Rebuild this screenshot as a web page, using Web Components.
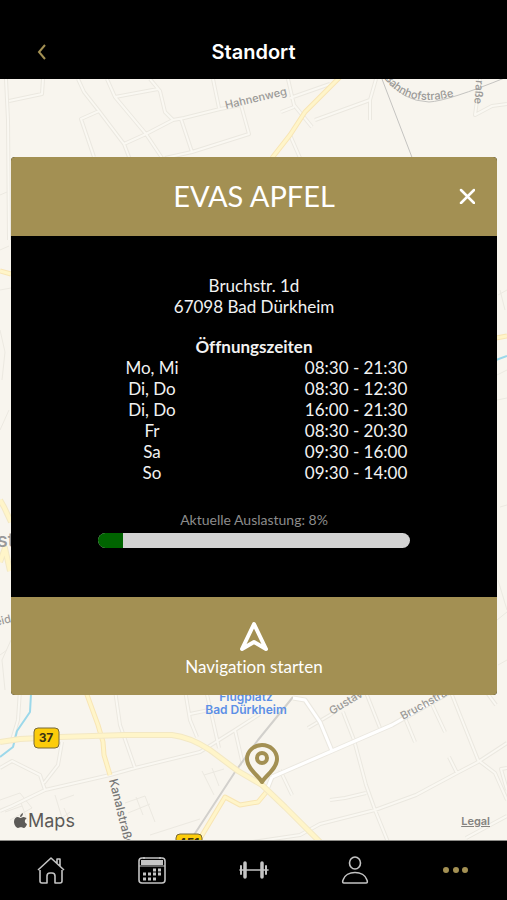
<!DOCTYPE html>
<html lang="de">
<head>
<meta charset="utf-8">
<meta name="viewport" content="width=device-width, initial-scale=1">
<title>Standort</title>
<style>
    body {
        margin: 0;
        background: #000;
        font-family: Lato, "Open Sans", sans-serif;
        font-variant-ligatures: none;
        --gold: #a39053;
    }
</style>
</head>
<body>
<app-shell>
    <app-header slot="header">Standort</app-header>
    <map-view>
        <location-card load="8">
            <span slot="name">EVAS APFEL</span>
            <span slot="street">Bruchstr. 1d</span>
            <span slot="city">67098 Bad Dürkheim</span>
            <opening-hours slot="hours">Öffnungszeiten</opening-hours>
            <span slot="action">Navigation starten</span>
        </location-card>
    </map-view>
    <tab-bar slot="footer"></tab-bar>
</app-shell>

<script>
function attach(el, html) {
    const template = document.createElement('template');
    template.innerHTML = html;
    el.attachShadow({mode: 'open'});
    el.shadowRoot.appendChild(template.content.cloneNode(true));
}

class AppShell extends HTMLElement {
    constructor() {
        super();
        attach(this, `
        <style>
            :host {
                display: flex;
                flex-direction: column;
                min-height: 100vh;
            }
            main {
                flex: 1;
                display: flex;
            }
        </style>
        <slot name="header"></slot>
        <main><slot></slot></main>
        <slot name="footer"></slot>
        `);
    }
}

class AppHeader extends HTMLElement {
    constructor() {
        super();
        attach(this, `
        <style>
            :host { display: block; background: #000; color: #fff; }
            header {
                display: grid;
                grid-template-columns: 84px 1fr 84px;
                align-items: center;
                padding: 32px 0 7px;
            }
            h1 {
                margin: 0;
                text-align: center;
                font: 600 20px/40px Inter, sans-serif;
            }
            button {
                height: 40px;
                padding: 0;
                border: 0;
                background: none;
                color: var(--gold);
            }
            svg { display: block; margin: auto; }
        </style>
        <header>
            <button aria-label="Zurück">
                <svg width="16" height="16" viewBox="0 0 16 16" fill="none" stroke="currentColor" stroke-width="2">
                    <path d="M11 1 5 8l6 7"/>
                </svg>
            </button>
            <h1><slot></slot></h1>
        </header>
        `);
    }
}

class MapView extends HTMLElement {
    constructor() {
        super();
        attach(this, `
        <style>
            :host {
                flex: 1;
                display: flex;
                flex-direction: column;
                position: relative;
                box-sizing: border-box;
                padding: 78px 10px 0 11px;
                background: #f8f5ee;
                overflow: hidden;
            }
            .canvas {
                position: absolute;
                inset: 0;
                width: 100%;
                height: 100%;
            }
            .canvas text { font-family: Inter, sans-serif; }
            .street { fill: #9b9a98; font-size: 11px; font-weight: 500; }
            .main-street { fill: #777; font-size: 12px; font-weight: 500; }
            .casing, .road, .main-casing, .main, .minor, .rail, .siding, .water { fill: none; stroke-linejoin: round; }
            .casing { stroke: #ebe8e0; stroke-width: 4; }
            .road { stroke: #faf8f2; stroke-width: 2; }
            .main-casing { stroke: #f3e8c4; stroke-width: 6; }
            .main { stroke: #fff5c9; stroke-width: 4; }
            .minor { stroke: #ece9e1; stroke-width: 1; }
            .rail { stroke: #d2d0cc; stroke-width: 2; }
            .siding { stroke: #c4c3c0; stroke-width: 1; }
            .water { stroke: #9cd8ea; stroke-width: 2; }
            .card, .attribution { position: relative; }
            .attribution {
                display: flex;
                justify-content: space-between;
                align-items: center;
                margin-top: auto;
                padding: 0 7px 7px 3px;
                font-family: Inter, sans-serif;
                color: #5c5a57;
            }
            .brand {
                display: flex;
                align-items: center;
                gap: 1px;
                font-size: 18px;
                line-height: 24px;
            }
            a {
                color: #85837f;
                font-size: 11px;
                font-weight: 600;
                line-height: 20px;
            }
        </style>
        <svg class="canvas" viewBox="0 79 507 761" preserveAspectRatio="xMidYMid slice">
            <defs>
                <path id="streets" d="M6 79 8 120 9 240M9 101 42 94 43 79M78 79 84 92 99 111 124 144 134 170M107 79 115 97 146 134 162 158
                    M99 111 81 119 94 157M115 97 158 89M150 79 160 91 165 112 173 120 146 134 124 144M173 120 184 118 220 109 241 105
                    M181 119 192 152 249 134 241 105M192 152 165 158M213 79 219 108M288 79 294 105 312 127M290 98 330 84M281 112 294 107
                    M315 120 370 100 376 79M370 100 370 120M290 135 300 158M480 79 475 115 492 106 507 104
                    M0 811 12 806 45 790 110 775 135 768 200 752 235 730 260 714M115 690 120 725 135 768M45 790 40 775 12 761 0 768
                    M62 742 58 765 44 783M20 690 18 720 12 740M185 690 190 720 197 737M190 714 209 710M206 690 219 748M235 730 243 765
                    M308 728 330 715 360 693M343 712 354 740 366 785 375 810 388 842M365 690 380 728M405 718 415 742
                    M430 700 445 732M450 690 478 760 495 773 507 800M507 743 478 762 457 773 416 795 375 810 320 824 300 835 253 842
                    M457 773 449 757M330 800 345 798 366 793M280 770 292 795M485 690 496 705M507 768 501 769 507 790M466 838 507 816"/>
                <path id="lanes" d="M272 777 332 751 392 725 450 692M332 751 320 722 305 700 293 698M272 777 268 787"/>
                <path id="roads" d="M0 742 20 739 60 737 125 735 172 735Q190 737 210 750L238 771 262 785 285 807 322 844
                    M0 500 4 507 11 522M0 562 5 548 10 571"/>
                <path id="branch" d="M340 77 305 112 290 135 272 158M86 692 98 725 103 742 104 755 110 775M198 842 225 797 240 805 258 802 268 790M0 271 11 274M496 338 507 336"/>
                <path id="curve" d="M384 78Q400 100 427 100 448 100 470 91"/>
            </defs>
            <path class="minor" d="M0 800 20 793 32 808 10 820M20 800 28 822M5 812 22 806M55 795 62 818 70 812M60 800 74 795M64 808 72 826
                M125 803 145 796M128 813 150 804M136 797 143 815M145 796 155 822M150 835 200 819M204 775 224 769M202 771 214 795M212 768 219 786
                M0 195 7 192M0 250 9 246M0 290 11 288M0 330 5 352 2 380M0 430 9 410M11 640 2 660 5 690M0 655 7 650
                M498 295 507 290M500 290 505 310M497 375 507 370M497 400 507 398M500 507 507 505M498 580 507 610M497 620 507 612M498 665 507 660"/>
            <use class="casing" href="#streets"/>
            <use class="road" href="#streets"/>
            <path class="siding" d="M382 79 413 160M387 79Q402 101 429 102 448 101 507 77"/>
            <path class="rail" d="M192 838 235 772 258 740 293 697"/>
            <path class="water" d="M31 694 30 712 17 731 13 747 0 757M496 360 507 356"/>
            <use class="casing" href="#lanes" style="stroke-width: 5"/>
            <use class="road" href="#lanes" style="stroke: #fff; stroke-width: 3"/>
            <use class="main-casing" href="#branch" style="stroke: #f8e5b4; stroke-width: 5"/>
            <use class="main" href="#branch" style="stroke-width: 3"/>
            <use class="main-casing" href="#roads"/>
            <use class="main" href="#roads"/>

            <text class="street" transform="translate(226 109) rotate(-13)">Hahnenweg</text>
            <text class="street"><textPath href="#curve">Bahnhofstraße</textPath></text>
            <text class="street" transform="translate(476 80) rotate(94)">raße</text>
            <text class="street" transform="translate(332 715) rotate(-31)">Gustav</text>
            <text class="street" transform="translate(403 720) rotate(-29)">Bruchstra</text>
            <text class="main-street" transform="translate(109 780) rotate(76)">Kanalstraße</text>
            <text x="-3" y="547" font-size="20" font-weight="500" fill="#999">st</text>
            <text class="street" transform="translate(-4 626) rotate(-14)">eid</text>
            <g fill="#5c8fe6" font-size="12" font-weight="600" text-anchor="middle">
                <text x="246" y="701">Flugplatz</text>
                <text x="246" y="714">Bad Dürkheim</text>
            </g>

            <g fill="#fccc0a" stroke="#77683a" stroke-width="1">
                <rect x="34" y="728" width="25" height="20" rx="4"/>
                <rect x="176" y="834" width="26" height="20" rx="4"/>
            </g>
            <g fill="#3d3413" font-size="12" font-weight="700" text-anchor="middle">
                <text x="46" y="742">37</text>
                <text x="189" y="847">451</text>
            </g>

            <g fill="none" stroke="#a39053" stroke-width="4" stroke-linejoin="round">
                <path fill="#f8f5ee" d="M262 782C259 776 247 769 247 759a15 14 0 0 1 30 0C277 769 265 776 262 782Z"/>
                <circle cx="262" cy="758" r="5"/>
            </g>
        </svg>
        <div class="card"><slot></slot></div>
        <div class="attribution">
            <span class="brand">
                <svg width="13" height="16" viewBox="0 0 13 16" fill="currentColor">
                    <path d="M9 0C9 2 8 4 6 4 6 2 7 1 9 0ZM6.500 5C7.500 5 8 4 9.500 4 11 4 12 5 12.500 5.500 10 7 10.500 10 13 11 12.500 13 11 15 9.800 15 8.500 15 8.300 14.300 7 14.300S5.200 15 4 15C2 15 0 11.500 0 8.800 0 6 1.800 4 3.800 4 5 4 5.800 5 6.500 5Z"/>
                </svg>
                <span>Maps</span>
            </span>
            <a href="#legal">Legal</a>
        </div>
        `);
    }
}

class OpeningHours extends HTMLElement {
    constructor() {
        super();
        attach(this, `
        <style>
            :host { display: block; }
            table {
                width: 84%;
                margin: 0 auto;
                border-collapse: collapse;
                table-layout: fixed;
            }
            caption { font-weight: 700; }
            th, td {
                width: 50%;
                padding: 0;
                font-weight: 400;
                text-align: center;
            }
        </style>
        <table>
            <caption><slot></slot></caption>
            <tbody></tbody>
        </table>
        `);
        const hours = [
            ['Mo, Mi', '08:30 - 21:30'],
            ['Di, Do', '08:30 - 12:30'],
            ['Di, Do', '16:00 - 21:30'],
            ['Fr', '08:30 - 20:30'],
            ['Sa', '09:30 - 16:00'],
            ['So', '09:30 - 14:00']
        ];
        this.shadowRoot.querySelector('tbody').innerHTML = hours
            .map(([day, time]) => `<tr><th scope="row">${day}</th><td>${time}</td></tr>`)
            .join('');
    }
}

class LocationCard extends HTMLElement {
    constructor() {
        super();
        attach(this, `
        <style>
            :host {
                display: block;
                border-radius: 4px;
                overflow: hidden;
                background: #000;
                color: #f2f2f2;
                font-size: 17px;
                line-height: 21px;
                text-align: center;
            }
            header {
                display: grid;
                grid-template-columns: 60px 1fr 60px;
                align-items: center;
                padding: 19px 0 20px;
                background: var(--gold);
                color: #fff;
            }
            h2 {
                grid-column: 2;
                margin: 0;
                font-size: 29px;
                font-weight: 400;
                line-height: 40px;
            }
            button {
                border: 0;
                padding: 0;
                background: none;
                color: #fff;
                font: inherit;
            }
            svg { display: block; margin: 0 auto; }
            .body { padding: 39px 0 49px; }
            address { font-style: normal; }
            address slot { display: block; }
            .hours { margin: 19px 0 28px; }
            label {
                display: block;
                margin-bottom: 4px;
                color: #8c8c8c;
                font-size: 14px;
                line-height: 18px;
            }
            progress {
                display: block;
                width: 64%;
                height: 15px;
                margin: 0 auto;
                border: 0;
                border-radius: 8px;
                overflow: hidden;
                appearance: none;
                -webkit-appearance: none;
            }
            progress::-webkit-progress-bar { background: #d3d3d3; }
            progress::-webkit-progress-value { background: #006400; }
            .start {
                width: 100%;
                padding: 23px 0 18px;
                background: var(--gold);
            }
            .start svg { margin-bottom: 4px; }
        </style>
        <header>
            <h2><slot name="name"></slot></h2>
            <button aria-label="Schließen">
                <svg width="16" height="16" viewBox="0 0 16 16" stroke="currentColor" stroke-width="2.500" stroke-linecap="round">
                    <path d="M2 2l13 13M15 2 2 15"/>
                </svg>
            </button>
        </header>
        <div class="body">
            <address>
                <slot name="street"></slot>
                <slot name="city"></slot>
            </address>
            <div class="hours"><slot name="hours"></slot></div>
            <label for="load"></label>
            <progress id="load" max="100"></progress>
        </div>
        <button class="start">
            <svg width="32" height="32" viewBox="0 0 32 32" fill="none" stroke="currentColor" stroke-width="4" stroke-linejoin="round">
                <path d="M16 4 28 29 16 22 4 29Z"/>
            </svg>
            <slot name="action"></slot>
        </button>
        `);
    }

    connectedCallback() {
        const load = this.getAttribute('load');
        this.shadowRoot.querySelector('label').textContent = `Aktuelle Auslastung: ${load}%`;
        this.shadowRoot.querySelector('progress').value = load;
    }
}

class TabItem extends HTMLElement {
    constructor() {
        super();
        attach(this, `
        <style>
            :host { display: block; flex: 1; color: #c4c4c4; }
            :host([active]) { color: var(--gold); }
            a {
                display: flex;
                justify-content: center;
                padding: 14px 0 15px;
                color: inherit;
            }
        </style>
        <a href="#"><slot></slot></a>
        `);
    }

    connectedCallback() {
        const link = this.shadowRoot.querySelector('a');
        link.href = '#' + this.getAttribute('to');
        link.setAttribute('aria-label', this.getAttribute('label'));
    }
}

class TabBar extends HTMLElement {
    constructor() {
        super();
        attach(this, `
        <style>
            :host { display: block; border-top: 1px solid #8c8b87; background: #000; }
            nav { display: flex; }
            svg { display: block; fill: none; stroke: currentColor; stroke-width: 1.6; stroke-linejoin: round; }
        </style>
        <nav>
            <tab-item to="home" label="Start">
                <svg width="30" height="30" viewBox="0 0 30 30">
                    <path d="M4 15v11q0 2 2 2h5v-7q0-3 3-3h2q3 0 3 3v7h5q2 0 2-2V15M2 15 15 3l13 12M21 8V4h3v7"/>
                </svg>
            </tab-item>
            <tab-item to="kurse" label="Kurse">
                <svg width="30" height="30" viewBox="0 0 30 30">
                    <rect x="2" y="3" width="26" height="25" rx="3"/>
                    <path d="M4 5h22v5H4Z" fill="currentColor" stroke="none"/>
                    <path d="M2 11h26" stroke-width="1"/>
                    <path d="M7 2v2M23 2v2"/>
                    <path d="M16 15h3m2 0h3M6 19h3m2 0h3m2 0h3m2 0h3M6 24h3m2 0h3m2 0h3" stroke-width="3"/>
                </svg>
            </tab-item>
            <tab-item to="training" label="Training">
                <svg width="30" height="30" viewBox="0 0 30 30" stroke-linecap="round">
                    <path d="M1 15h28"/>
                    <path d="M6 8v14M23 8v14" stroke-width="3.500"/>
                    <path d="M2 11v8M27 11v8" stroke-width="2"/>
                </svg>
            </tab-item>
            <tab-item to="profil" label="Profil">
                <svg width="30" height="30" viewBox="0 0 30 30">
                    <ellipse cx="15" cy="8" rx="5.500" ry="6"/>
                    <path d="M4 28q-2 0-1-3C6 15 24 15 27 25q1 3-1 3Z"/>
                </svg>
            </tab-item>
            <tab-item to="mehr" label="Mehr" active>
                <svg width="30" height="30" viewBox="0 0 30 30">
                    <path d="M5 15h0M15 15h0M24 15h0" stroke-width="6" stroke-linecap="round"/>
                </svg>
            </tab-item>
        </nav>
        `);
    }
}

customElements.define('app-shell', AppShell);
customElements.define('app-header', AppHeader);
customElements.define('map-view', MapView);
customElements.define('opening-hours', OpeningHours);
customElements.define('location-card', LocationCard);
customElements.define('tab-item', TabItem);
customElements.define('tab-bar', TabBar);
</script>
</body>
</html>
